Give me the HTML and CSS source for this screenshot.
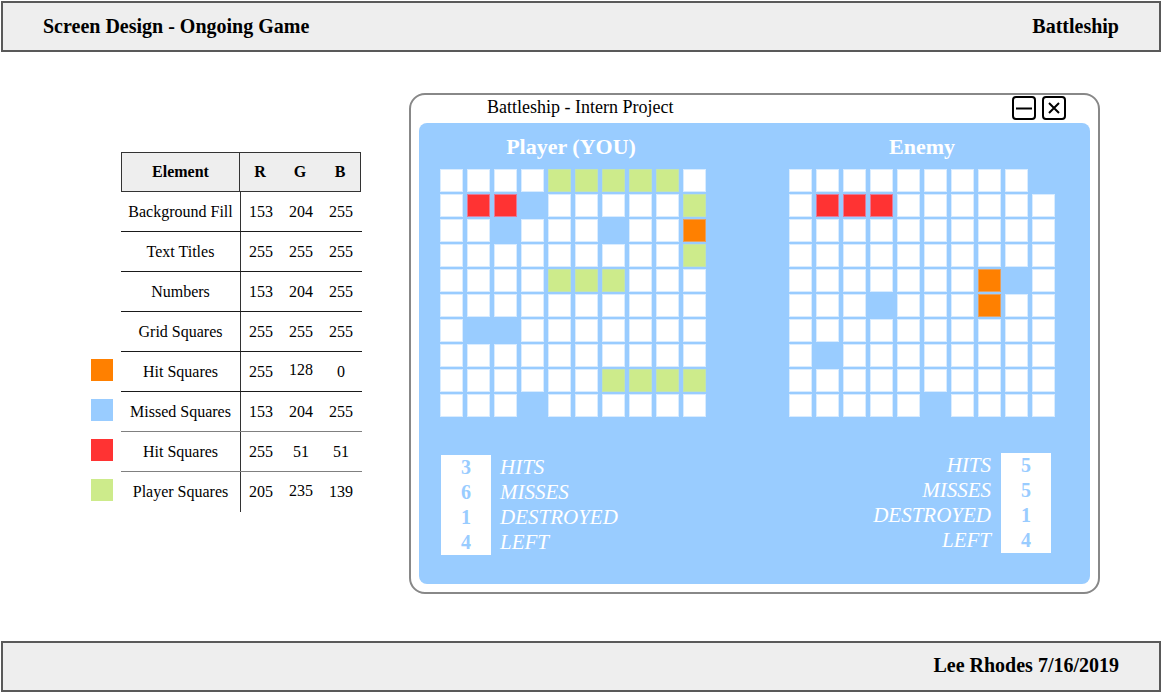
FILE: index.html
```html
<!DOCTYPE html>
<html lang="en">
<head>
<meta charset="utf-8">
<title>Screen Design - Ongoing Game</title>
<link rel="stylesheet" href="styles.css">
</head>
<body>
<header class="bar top-bar">
  <span>Screen Design - Ongoing Game</span>
  <span>Battleship</span>
</header>

<main class="main">
  <section class="legend">
    <div class="lrow">
      <span class="sw"></span>
      <div class="cells head">
        <div class="c-el">Element</div>
        <div class="c-rgb"><span>R</span><span>G</span><span>B</span></div>
      </div>
    </div>
    <div class="lrow">
      <span class="sw"></span>
      <div class="cells">
        <div class="c-el">Background Fill</div>
        <div class="c-rgb"><span>153</span><span>204</span><span>255</span></div>
      </div>
    </div>
    <div class="lrow">
      <span class="sw"></span>
      <div class="cells">
        <div class="c-el">Text Titles</div>
        <div class="c-rgb"><span>255</span><span>255</span><span>255</span></div>
      </div>
    </div>
    <div class="lrow">
      <span class="sw"></span>
      <div class="cells">
        <div class="c-el">Numbers</div>
        <div class="c-rgb"><span>153</span><span>204</span><span>255</span></div>
      </div>
    </div>
    <div class="lrow">
      <span class="sw"></span>
      <div class="cells">
        <div class="c-el">Grid Squares</div>
        <div class="c-rgb"><span>255</span><span>255</span><span>255</span></div>
      </div>
    </div>
    <div class="lrow">
      <span class="sw sw-orange"></span>
      <div class="cells">
        <div class="c-el">Hit Squares</div>
        <div class="c-rgb"><span>255</span><span class="up">128</span><span>0</span></div>
      </div>
    </div>
    <div class="lrow">
      <span class="sw sw-blue"></span>
      <div class="cells gray">
        <div class="c-el">Missed Squares</div>
        <div class="c-rgb"><span>153</span><span>204</span><span>255</span></div>
      </div>
    </div>
    <div class="lrow">
      <span class="sw sw-red"></span>
      <div class="cells gray">
        <div class="c-el">Hit Squares</div>
        <div class="c-rgb"><span>255</span><span>51</span><span>51</span></div>
      </div>
    </div>
    <div class="lrow">
      <span class="sw sw-green"></span>
      <div class="cells last">
        <div class="c-el">Player Squares</div>
        <div class="c-rgb"><span>205</span><span class="up">235</span><span>139</span></div>
      </div>
    </div>
  </section>

  <section class="window">
    <div class="titlebar">
      <span class="wtitle">Battleship - Intern Project</span>
      <div class="wbtns">
        <span class="wbtn"><svg width="20" height="20" viewBox="0 0 20 20"><path d="M2 10.5H18" stroke="#000" stroke-width="2"/></svg></span>
        <span class="wbtn"><svg width="20" height="20" viewBox="0 0 20 20"><path d="M5 5L15 15M15 5L5 15" stroke="#000" stroke-width="2"/></svg></span>
      </div>
    </div>
    <div class="panel">
      <div class="board">
        <div class="board-title">Player (YOU)</div>
        <div class="grid">
          <i class="c"></i><i class="c"></i><i class="c"></i><i class="c"></i><i class="p"></i><i class="p"></i><i class="p"></i><i class="p"></i><i class="p"></i><i class="c"></i>
          <i class="c"></i><i class="h"></i><i class="h"></i><i class="m"></i><i class="c"></i><i class="c"></i><i class="c"></i><i class="c"></i><i class="c"></i><i class="p"></i>
          <i class="c"></i><i class="c"></i><i class="m"></i><i class="c"></i><i class="c"></i><i class="c"></i><i class="m"></i><i class="c"></i><i class="c"></i><i class="o"></i>
          <i class="c"></i><i class="c"></i><i class="c"></i><i class="c"></i><i class="c"></i><i class="c"></i><i class="c"></i><i class="c"></i><i class="c"></i><i class="p"></i>
          <i class="c"></i><i class="c"></i><i class="c"></i><i class="c"></i><i class="p"></i><i class="p"></i><i class="p"></i><i class="c"></i><i class="c"></i><i class="c"></i>
          <i class="c"></i><i class="c"></i><i class="c"></i><i class="c"></i><i class="c"></i><i class="c"></i><i class="c"></i><i class="c"></i><i class="c"></i><i class="c"></i>
          <i class="c"></i><i class="m"></i><i class="m"></i><i class="c"></i><i class="c"></i><i class="c"></i><i class="c"></i><i class="c"></i><i class="c"></i><i class="c"></i>
          <i class="c"></i><i class="c"></i><i class="c"></i><i class="c"></i><i class="c"></i><i class="c"></i><i class="c"></i><i class="c"></i><i class="c"></i><i class="c"></i>
          <i class="c"></i><i class="c"></i><i class="c"></i><i class="c"></i><i class="c"></i><i class="c"></i><i class="p"></i><i class="p"></i><i class="p"></i><i class="p"></i>
          <i class="c"></i><i class="c"></i><i class="c"></i><i class="m"></i><i class="c"></i><i class="c"></i><i class="c"></i><i class="c"></i><i class="c"></i><i class="c"></i>
        </div>
        <div class="stats">
          <div class="nums"><span>3</span><span>6</span><span>1</span><span>4</span></div>
          <div class="labels"><span>HITS</span><span>MISSES</span><span>DESTROYED</span><span>LEFT</span></div>
        </div>
      </div>
      <div class="board">
        <div class="board-title">Enemy</div>
        <div class="grid">
          <i class="c"></i><i class="c"></i><i class="c"></i><i class="c"></i><i class="c"></i><i class="c"></i><i class="c"></i><i class="c"></i><i class="c"></i><i class="m"></i>
          <i class="c"></i><i class="h"></i><i class="h"></i><i class="h"></i><i class="c"></i><i class="c"></i><i class="c"></i><i class="c"></i><i class="c"></i><i class="c"></i>
          <i class="c"></i><i class="c"></i><i class="c"></i><i class="c"></i><i class="c"></i><i class="c"></i><i class="c"></i><i class="c"></i><i class="c"></i><i class="c"></i>
          <i class="c"></i><i class="c"></i><i class="c"></i><i class="c"></i><i class="c"></i><i class="c"></i><i class="c"></i><i class="c"></i><i class="c"></i><i class="c"></i>
          <i class="c"></i><i class="c"></i><i class="c"></i><i class="c"></i><i class="c"></i><i class="c"></i><i class="c"></i><i class="o"></i><i class="m"></i><i class="c"></i>
          <i class="c"></i><i class="c"></i><i class="c"></i><i class="m"></i><i class="c"></i><i class="c"></i><i class="c"></i><i class="o"></i><i class="c"></i><i class="c"></i>
          <i class="c"></i><i class="c"></i><i class="c"></i><i class="c"></i><i class="c"></i><i class="c"></i><i class="c"></i><i class="c"></i><i class="c"></i><i class="c"></i>
          <i class="c"></i><i class="m"></i><i class="c"></i><i class="c"></i><i class="c"></i><i class="c"></i><i class="c"></i><i class="c"></i><i class="c"></i><i class="c"></i>
          <i class="c"></i><i class="c"></i><i class="c"></i><i class="c"></i><i class="c"></i><i class="c"></i><i class="c"></i><i class="c"></i><i class="c"></i><i class="c"></i>
          <i class="c"></i><i class="c"></i><i class="c"></i><i class="c"></i><i class="c"></i><i class="m"></i><i class="c"></i><i class="c"></i><i class="c"></i><i class="c"></i>
        </div>
        <div class="stats stats-right">
          <div class="labels"><span>HITS</span><span>MISSES</span><span>DESTROYED</span><span>LEFT</span></div>
          <div class="nums"><span>5</span><span>5</span><span>1</span><span>4</span></div>
        </div>
      </div>
    </div>
  </section>
</main>

<footer class="bar bottom-bar">
  <span>Lee Rhodes 7/16/2019</span>
</footer>
</body>
</html>
```

FILE: styles.css
```css
html, body {
  margin: 0;
  padding: 0;
}

body {
  width: 1162px;
  height: 693px;
  display: flex;
  flex-direction: column;
  font-family: "Liberation Serif", "Times New Roman", serif;
  color: #000;
  background: #fff;
  overflow: hidden;
}

.bar {
  box-sizing: border-box;
  margin: 0 1px;
  border: 2px solid #595959;
  background: #eeeeee;
  display: flex;
  align-items: center;
  justify-content: space-between;
  padding: 0 40px;
  font-size: 20px;
  font-weight: bold;
  line-height: 23px;
}

.top-bar {
  margin-top: 1px;
  height: 51px;
}

.bottom-bar {
  height: 51px;
  margin-bottom: 1px;
  justify-content: flex-end;
  padding-bottom: 2px;
}

.main {
  flex: 1;
  display: flex;
  align-items: flex-start;
  padding-left: 91px;
}

/* ---------- legend table ---------- */
.legend {
  margin-top: 100px;
  display: flex;
  flex-direction: column;
  font-size: 16px;
}

.lrow {
  display: flex;
  align-items: center;
}

.sw {
  width: 22px;
  height: 22px;
  margin-right: 8px;
  margin-top: -4px;
}

.sw-orange { background: #ff8000; }
.sw-blue { background: #99ccff; }
.sw-red { background: #ff3333; }
.sw-green { background: #cdeb8b; }

.cells {
  box-sizing: border-box;
  width: 241px;
  height: 40px;
  display: flex;
  border-bottom: 1px solid #1a1a1a;
}

.cells.gray { border-bottom-color: #808080; }
.cells.last { border-bottom: none; }

.cells.head {
  width: 240px;
  border: 1px solid #333;
  background: #eeeeee;
  font-weight: bold;
}

.c-el {
  box-sizing: border-box;
  width: 120px;
  border-right: 1px solid #333;
  display: flex;
  align-items: center;
  justify-content: center;
}

.head .c-el { width: 119px; }

.c-rgb {
  flex: 1;
  display: grid;
  grid-template-columns: repeat(3, 40px);
  align-items: center;
  justify-items: center;
}

.c-rgb .up { margin-top: -3px; }

/* ---------- window ---------- */
.window {
  box-sizing: border-box;
  margin-top: 41px;
  margin-left: 47px;
  width: 691px;
  height: 501px;
  border: 2px solid #888;
  border-radius: 16px;
  padding: 0 8px 8px;
  display: flex;
  flex-direction: column;
}

.titlebar {
  height: 28px;
  display: flex;
  align-items: flex-start;
  justify-content: space-between;
  padding: 0 24px 0 68px;
}

.wtitle {
  font-size: 18px;
  line-height: 24px;
}

.wbtns {
  display: flex;
  gap: 6px;
  margin-top: 1px;
}

.wbtn {
  box-sizing: border-box;
  width: 24px;
  height: 24px;
  border: 2px solid #000;
  border-radius: 4px;
  display: flex;
  align-items: center;
  justify-content: center;
}

.wbtn svg { display: block; }

.panel {
  flex: 1;
  background: #99ccff;
  border-radius: 8px;
  padding: 12px 34px 0 21px;
  display: flex;
  gap: 83px;
}

.board {
  width: 266px;
  display: flex;
  flex-direction: column;
}

.board-title {
  color: #fff;
  font-size: 22px;
  font-weight: bold;
  line-height: 24px;
  text-align: center;
  margin-bottom: 10px;
}

.board:first-child .board-title { padding-right: 4px; }

.grid {
  display: grid;
  grid-template-columns: repeat(10, 23px);
  grid-auto-rows: 23px;
  column-gap: 4px;
  row-gap: 2px;
}

.grid i {
  box-sizing: border-box;
  display: block;
  border: 1px solid transparent;
}

.grid .c { background: #fff; border-color: #d9ecff; }
.grid .h { background: #ff3333; border-color: #e37a99; }
.grid .o { background: #ff8000; border-color: #e6a060; }
.grid .p { background: #cdeb8b; border-color: #c2e4b0; }
.grid .m { background: transparent; border: none; }

.stats {
  margin-top: 38px;
  display: flex;
  gap: 9px;
  padding-left: 1px;
}

.stats-right {
  margin-top: 36px;
  justify-content: flex-end;
  padding-left: 0;
  padding-right: 4px;
  gap: 10px;
}

.nums {
  width: 50px;
  background: #fff;
  display: flex;
  flex-direction: column;
  align-items: center;
  color: #99ccff;
  font-size: 20px;
  font-weight: bold;
  line-height: 25px;
}

.labels {
  display: flex;
  flex-direction: column;
  color: #fff;
  font-size: 21px;
  font-style: italic;
  line-height: 25px;
}

.stats-right .labels { align-items: flex-end; }
```
